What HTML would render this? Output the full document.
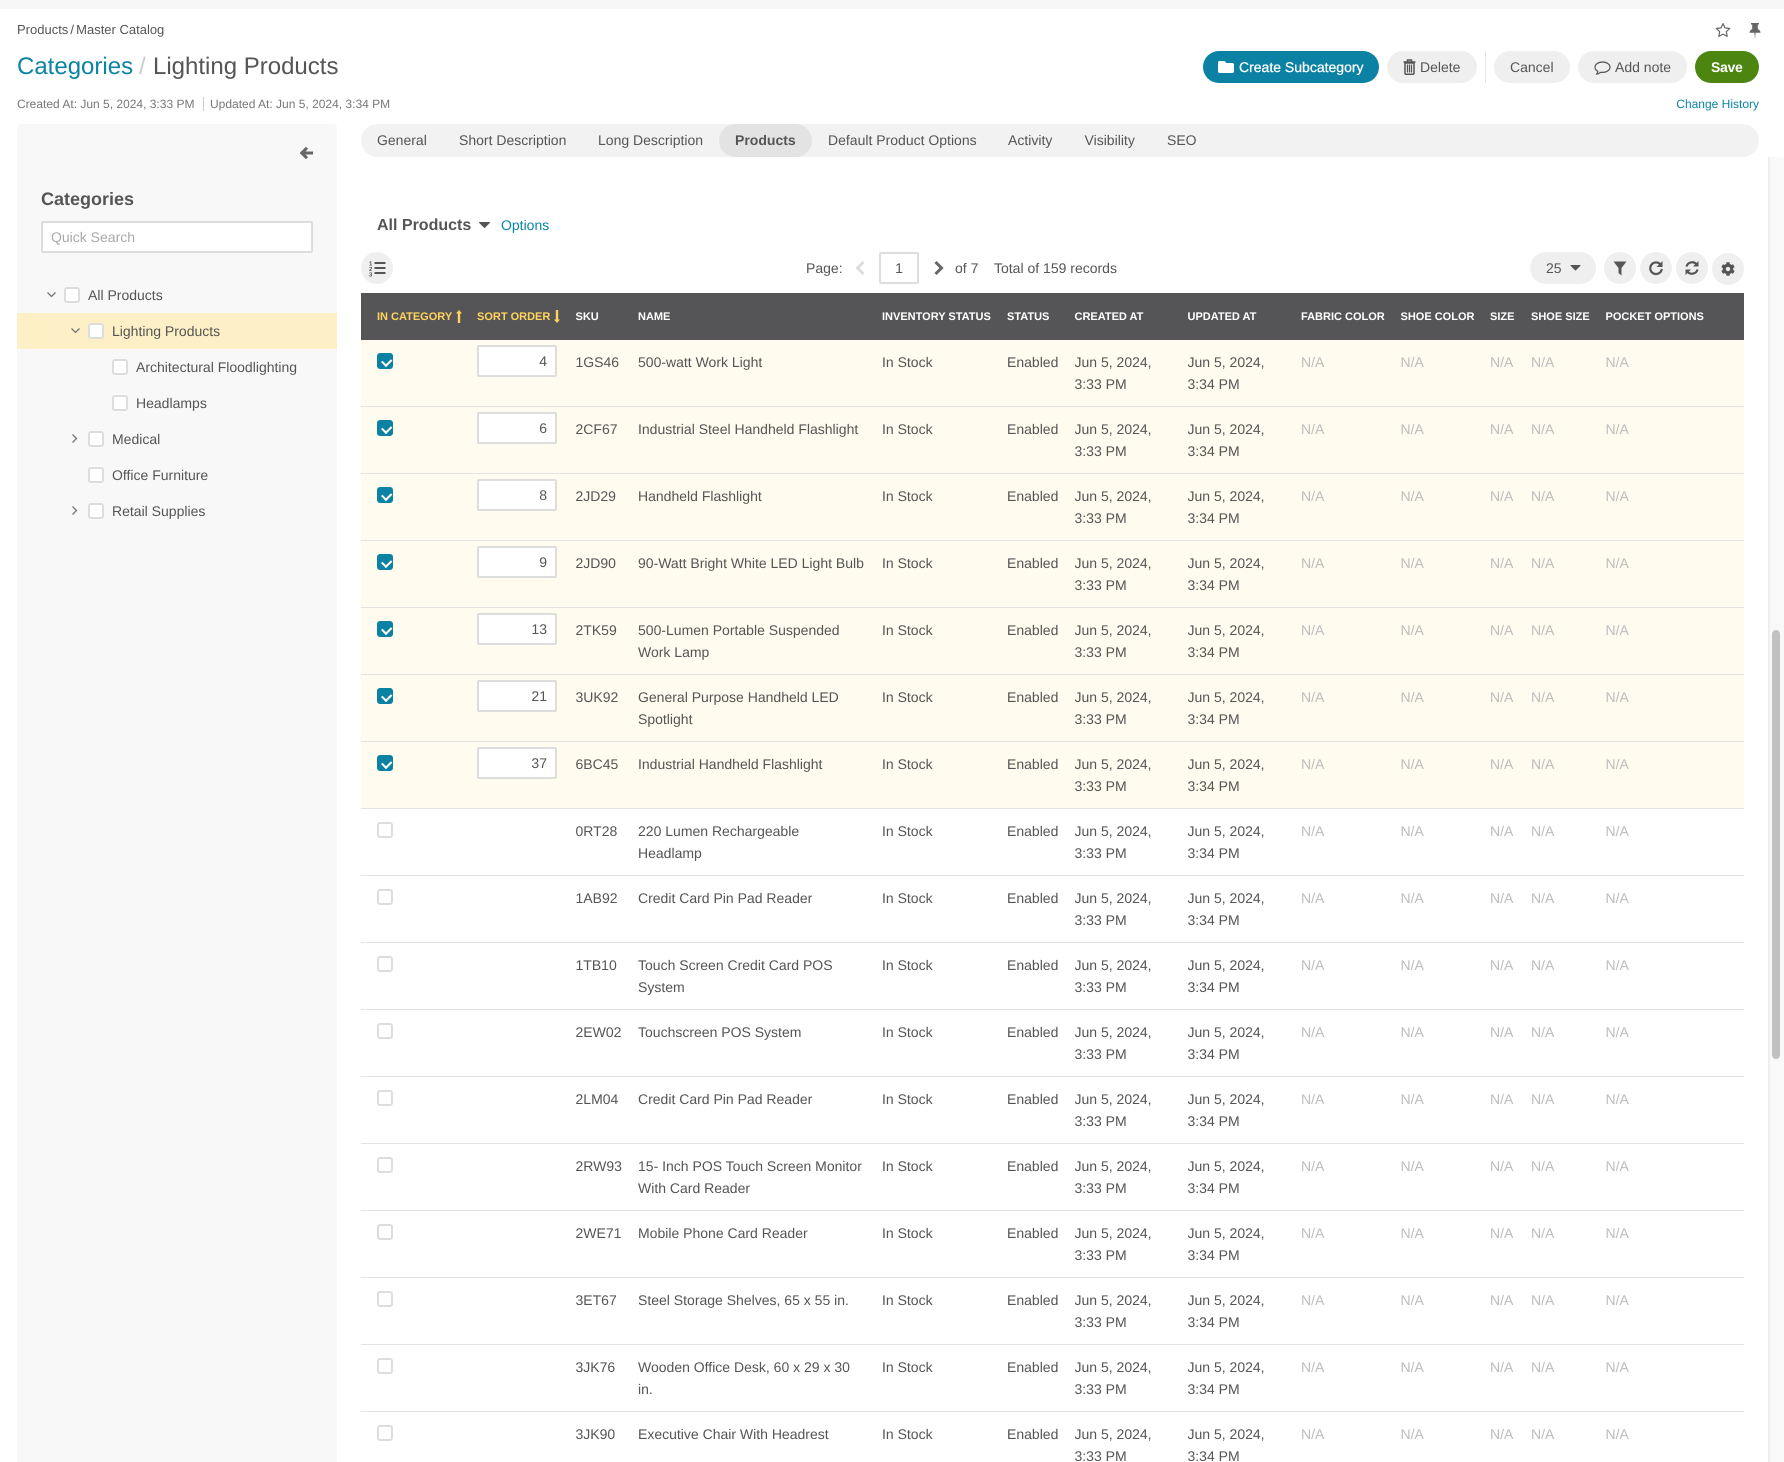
<!DOCTYPE html>
<html><head><meta charset="utf-8"><title>Lighting Products</title>
<style>
*{box-sizing:border-box}
html,body{margin:0;padding:0;background:#fff;width:1784px;height:1462px;overflow:hidden}
body{font-family:"Liberation Sans",Arial,sans-serif;font-size:14px;color:#555;text-rendering:geometricPrecision}
#w{position:relative;width:1784px;height:1462px;overflow:hidden}
.a{position:absolute;white-space:nowrap;line-height:20px}
svg{position:absolute;display:block}
a{color:#0b84a3;text-decoration:none}
.btn{position:absolute;top:51px;height:32px;border-radius:16px;background:#efefef;line-height:32px;font-size:14px;white-space:nowrap}
.btn span{position:absolute;top:0}
.rd{position:absolute;width:32px;height:32px;border-radius:50%;background:#efefef}
.t{position:absolute;line-height:33px;top:124px;white-space:nowrap}
.ck{position:absolute;width:16px;height:16px;background:#fff;border:2px solid #ddd;border-radius:3px}
.tree{position:absolute;line-height:20px;white-space:nowrap}
table{position:absolute;left:361px;top:293px;width:1383px;border-collapse:separate;border-spacing:0;table-layout:fixed}
th{height:47px;background:#555557;color:#fff;font-size:11px;font-weight:700;text-align:left;padding:0;white-space:nowrap;vertical-align:middle}
th.s{color:#ffd35c;position:relative}
td{height:67px;padding:11px 0 0;line-height:22px;vertical-align:top;border-bottom:1px solid #e3e3e3;white-space:nowrap;overflow:hidden}
td:nth-child(1),td:nth-child(2){padding:0}
tr.y td{background:#fffbef}
td.n{color:#bdbdbd}
.cb{display:block;position:relative;width:16px;height:16px;margin:13px 0 0 16px;background:#fff;border:2px solid #ddd;border-radius:3px}
.cb.on{background:#0b82a3;border-color:#0b82a3}
.cb.on:after{content:"";position:absolute;left:2.5px;top:2.5px;width:7px;height:4.5px;border-left:2.5px solid #fff;border-bottom:2.5px solid #fff;transform:rotate(-45deg)}
.so{display:block;width:80px;height:32px;margin-top:5px;border:2px solid #ddd;border-radius:2px;background:#fff;text-align:right;padding-right:8px;line-height:29px;font-weight:400}
</style></head><body><div id="w">

<div style="position:absolute;left:0;top:0;width:1784px;height:9px;background:#f7f7f7"></div>
<div class="a" style="left:17px;top:20px;font-size:13px"><span style="word-spacing:-1.5px">Products / </span>Master Catalog</div>
<div class="a" style="left:17px;top:51px;font-size:24px;line-height:32px;color:#0b84a3">Categories</div>
<div class="a" style="left:139px;top:51px;font-size:24px;line-height:32px;color:#ccc">/</div>
<div class="a" style="left:153px;top:51px;font-size:24px;line-height:32px">Lighting Products</div>
<div class="a" style="left:17px;top:94px;font-size:12px;color:#777">Created At: Jun 5, 2024, 3:33 PM</div>
<div style="position:absolute;left:203px;top:97px;width:1px;height:14px;background:#ccc"></div>
<div class="a" style="left:210px;top:94px;font-size:12px;color:#777">Updated At: Jun 5, 2024, 3:34 PM</div>

<svg style="left:1715px;top:22px" width="16" height="16" viewBox="0 0 16 16"><path d="M8 1.600l2 4.300 4.700.6-3.400 3.200.9 4.700L8 12.100l-4.200 2.300.9-4.700L1.300 6.500l4.700-.6z" fill="none" stroke="#666" stroke-width="1.200" stroke-linejoin="round"/></svg>
<svg style="left:1749px;top:23px" width="12" height="16" viewBox="0 0 12 16"><path d="M2 0h8v1.500H8.800v4.500c1.500.8 2.700 2 2.700 3.800H6.600L6 16l-.6-6.200H.5C.5 8 1.700 6.800 3.200 6V1.500H2z" fill="#666"/></svg>

<div class="btn" style="left:1203px;width:176px;background:#0b82a3;color:#fff">
<svg style="left:15px;top:9px" width="16" height="14" viewBox="0 32 512 448"><path fill="#fff" d="M464 128H272l-64-64H48C21.500 64 0 85.500 0 112v288c0 26.500 21.500 48 48 48h416c26.500 0 48-21.500 48-48V176c0-26.500-21.500-48-48-48z"/></svg>
<span style="left:36px;-webkit-text-stroke:.25px #fff">Create Subcategory</span></div>

<div class="btn" style="left:1387px;width:90px">
<svg style="left:16px;top:8px" width="13" height="16" viewBox="0 0 13 16"><path d="M4.500 2.300V1h4v1.300M.5 3h12" fill="none" stroke="#555" stroke-width="1.500"/><path d="M2 4v10.300c0 .6.400 1 1 1h7c.6 0 1-.4 1-1V4z" fill="none" stroke="#555" stroke-width="1.500"/><path d="M4.500 5.500v8M6.500 5.500v8M8.500 5.500v8" stroke="#555" stroke-width="1.200"/></svg>
<span style="left:33px">Delete</span></div>
<div style="position:absolute;left:1485px;top:51px;width:1px;height:32px;background:#e6e6e6"></div>
<div class="btn" style="left:1494px;width:76px"><span style="left:16px">Cancel</span></div>
<div class="btn" style="left:1578px;width:109px">
<svg style="left:16px;top:10px" width="17" height="15" viewBox="0 0 17 15"><path d="M8.500 1C4.400 1 1 3.300 1 6.200c0 1.700 1.100 3.200 2.900 4.100-.1 1-.6 2-1.400 2.900 1.600-.2 3.100-1 4.100-1.900.6.100 1.200.1 1.900.1 4.100 0 7.500-2.300 7.500-5.200S12.600 1 8.500 1z" fill="none" stroke="#555" stroke-width="1.200" stroke-linejoin="round"/></svg>
<span style="left:37px">Add note</span></div>
<div class="btn" style="left:1695px;width:64px;background:#4c8510;color:#fff"><span style="left:16px;font-weight:700;font-size:14px;letter-spacing:-.3px">Save</span></div>
<a class="a" style="right:25px;top:94px;font-size:12px">Change History</a>

<!-- Sidebar -->
<div style="position:absolute;left:17px;top:124px;width:320px;height:1338px;background:#f8f8f8;border-radius:4px 4px 0 0"></div>
<svg style="left:299px;top:146px" width="15" height="14" viewBox="0 0 15 14"><path d="M14 7H4M8 1.800 2.800 7 8 12.200" fill="none" stroke="#666" stroke-width="3"/></svg>
<div class="a" style="left:41px;top:188px;font-size:18px;line-height:22px;font-weight:700">Categories</div>
<div style="position:absolute;left:41px;top:221px;width:272px;height:32px;background:#fff;border:2px solid #ddd;border-radius:2px;padding-left:8px;line-height:28px;color:#aaa">Quick Search</div>

<div style="position:absolute;left:17px;top:313px;width:320px;height:36px;background:#fef0c6"></div>
<svg style="left:46px;top:291px" width="11" height="8" viewBox="0 0 11 8"><path d="M1.500 1.500l4 4 4-4" fill="none" stroke="#777" stroke-width="1.300"/></svg>
<div class="ck" style="left:64px;top:287px"></div><div class="tree" style="left:88px;top:285px">All Products</div>
<svg style="left:70px;top:327px" width="11" height="8" viewBox="0 0 11 8"><path d="M1.500 1.500l4 4 4-4" fill="none" stroke="#777" stroke-width="1.300"/></svg>
<div class="ck" style="left:88px;top:323px"></div><div class="tree" style="left:112px;top:321px">Lighting Products</div>
<div class="ck" style="left:112px;top:359px"></div><div class="tree" style="left:136px;top:357px">Architectural Floodlighting</div>
<div class="ck" style="left:112px;top:395px"></div><div class="tree" style="left:136px;top:393px">Headlamps</div>
<svg style="left:71px;top:433px" width="8" height="11" viewBox="0 0 8 11"><path d="M1.500 1.500l4 4-4 4" fill="none" stroke="#777" stroke-width="1.300"/></svg>
<div class="ck" style="left:88px;top:431px"></div><div class="tree" style="left:112px;top:429px">Medical</div>
<div class="ck" style="left:88px;top:467px"></div><div class="tree" style="left:112px;top:465px">Office Furniture</div>
<svg style="left:71px;top:505px" width="8" height="11" viewBox="0 0 8 11"><path d="M1.500 1.500l4 4-4 4" fill="none" stroke="#777" stroke-width="1.300"/></svg>
<div class="ck" style="left:88px;top:503px"></div><div class="tree" style="left:112px;top:501px">Retail Supplies</div>

<!-- Tabs -->
<div style="position:absolute;left:361px;top:124px;width:1398px;height:33px;background:#f2f2f2;border-radius:17px"></div>
<div style="position:absolute;left:719px;top:124px;width:93px;height:33px;background:#e3e3e3;border-radius:17px"></div>
<div class="t" style="left:377px">General</div>
<div class="t" style="left:459px">Short Description</div>
<div class="t" style="left:598px">Long Description</div>
<div class="t" style="left:735px;font-weight:700">Products</div>
<div class="t" style="left:828px">Default Product Options</div>
<div class="t" style="left:1008px">Activity</div>
<div class="t" style="left:1084.500px">Visibility</div>
<div class="t" style="left:1167px">SEO</div>

<!-- Scrollbar -->
<div style="position:absolute;left:1768px;top:157px;width:16px;height:1305px;background:#f9f9f9;border-left:2px solid #eee"></div>
<div style="position:absolute;left:1772px;top:630px;width:8px;height:429px;background:#c1c1c1;border-radius:4px"></div>

<!-- Toolbar -->
<div class="a" style="left:377px;top:215.500px;font-size:16px;font-weight:700">All Products</div>
<svg style="left:479px;top:222px" width="11" height="6" viewBox="0 0 11 6"><path d="M.5.500h10L5.500 5.500z" fill="#555" stroke="#555" stroke-linejoin="round"/></svg>
<a class="a" style="left:501px;top:215px">Options</a>

<div class="rd" style="left:361px;top:252px">
<svg style="left:8px;top:8px" width="17" height="17" viewBox="0 0 17 17"><path d="M5.500 3h11M5.500 8h11M5.500 13h11" stroke="#555" stroke-width="2"/><text x="0" y="5.500" font-size="6" font-weight="700" fill="#555" font-family="Liberation Sans">1</text><text x="0" y="11" font-size="6" font-weight="700" fill="#555" font-family="Liberation Sans">2</text><text x="0" y="16.500" font-size="6" font-weight="700" fill="#555" font-family="Liberation Sans">3</text></svg></div>

<div class="a" style="left:806px;top:258px">Page:</div>
<svg style="left:854px;top:260px" width="12" height="16" viewBox="0 0 12 16"><path d="M9.500 2L3.500 8l6 6" fill="none" stroke="#ddd" stroke-width="3"/></svg>
<div style="position:absolute;left:879px;top:252px;width:40px;height:32px;border:2px solid #ddd;border-radius:2px;text-align:center;line-height:28px">1</div>
<svg style="left:933px;top:260px" width="12" height="16" viewBox="0 0 12 16"><path d="M2.500 2l6 6-6 6" fill="none" stroke="#666" stroke-width="3"/></svg>
<div class="a" style="left:955px;top:258px">of 7</div>
<div class="a" style="left:994px;top:258px">Total of 159 records</div>

<div style="position:absolute;left:1530px;top:252px;width:66px;height:32px;border-radius:16px;background:#efefef"></div>
<div class="a" style="left:1546px;top:258px">25</div>
<svg style="left:1570px;top:265px" width="11" height="6" viewBox="0 0 11 6"><path d="M1 .5h9L5.500 5z" fill="#555" stroke="#555" stroke-linejoin="round"/></svg>

<div class="rd" style="left:1604px;top:252px"><svg style="left:9px;top:9px" width="14" height="15" viewBox="0 0 14 15"><path d="M.5.500h13L8.500 7v7.500L5.500 12V7z" fill="#555"/></svg></div>
<div class="rd" style="left:1640px;top:252px"><svg style="left:8px;top:8px" width="16" height="16" viewBox="0 0 16 16"><path d="M12.300 4.300A5.800 5.800 0 1 0 13.800 9" fill="none" stroke="#555" stroke-width="2.200"/><path d="M14.500 1v6h-6z" fill="#555"/></svg></div>
<div class="rd" style="left:1676px;top:252px"><svg style="left:8px;top:8px" width="16" height="16" viewBox="0 0 16 16"><path d="M2.500 6.500A5.800 5.800 0 0 1 12.500 4.300" fill="none" stroke="#555" stroke-width="2.200"/><path d="M13.500 9.500A5.800 5.800 0 0 1 3.500 11.700" fill="none" stroke="#555" stroke-width="2.200"/><path d="M14.500 1v5.500H9zM1.500 15V9.500H7z" fill="#555"/></svg></div>
<div class="rd" style="left:1712px;top:253px"><svg style="left:9px;top:9px" width="14" height="14" viewBox="0 0 512 512"><path fill="#555" d="M487.400 315.700l-42.600-24.600c4.300-23.200 4.300-47 0-70.200l42.600-24.600c4.900-2.800 7.100-8.600 5.500-14-11.100-35.600-30-67.800-54.700-94.600-3.800-4.100-10-5.100-14.800-2.300L380.800 110c-17.900-15.400-38.500-27.300-60.800-35.100V25.800c0-5.600-3.900-10.500-9.400-11.700-36.700-8.200-74.300-7.800-109.200 0-5.500 1.200-9.400 6.100-9.400 11.700V75c-22.200 7.900-42.800 19.800-60.800 35.100L88.700 85.500c-4.900-2.800-11-1.900-14.800 2.300-24.700 26.700-43.600 58.900-54.700 94.600-1.700 5.400.6 11.200 5.500 14L67.300 221c-4.300 23.200-4.300 47 0 70.200l-42.600 24.600c-4.900 2.800-7.100 8.600-5.500 14 11.100 35.600 30 67.800 54.700 94.600 3.800 4.100 10 5.100 14.800 2.300l42.600-24.600c17.900 15.400 38.500 27.300 60.800 35.100v49.200c0 5.600 3.900 10.500 9.400 11.700 36.700 8.200 74.300 7.800 109.200 0 5.500-1.200 9.400-6.100 9.400-11.700v-49.200c22.200-7.900 42.800-19.800 60.800-35.100l42.600 24.600c4.900 2.800 11 1.900 14.800-2.300 24.700-26.700 43.600-58.900 54.700-94.600 1.500-5.500-.7-11.300-5.600-14.100zM256 336c-44.100 0-80-35.900-80-80s35.900-80 80-80 80 35.900 80 80-35.900 80-80 80z"/></svg></div>

<!-- Table -->
<table>
<colgroup><col style="width:116px"><col style="width:98.500px"><col style="width:62.500px"><col style="width:244px"><col style="width:125px"><col style="width:67.500px"><col style="width:113px"><col style="width:113.500px"><col style="width:99.500px"><col style="width:89.500px"><col style="width:41px"><col style="width:74.500px"><col style="width:138.500px"></colgroup>
<thead><tr>
<th class="s" style="padding-left:16px">IN CATEGORY<svg style="left:95px;top:17px" width="6" height="13" viewBox="0 0 6 13"><path d="M3 0l3 3.500H4.200V13H1.800V3.500H0z" fill="#ffd35c"/></svg></th>
<th class="s">SORT ORDER<svg style="left:77px;top:17px" width="6" height="13" viewBox="0 0 6 13"><path d="M3 13l3-3.500H4.200V0H1.800v9.500H0z" fill="#ffd35c"/></svg></th>
<th>SKU</th><th>NAME</th><th>INVENTORY STATUS</th><th>STATUS</th><th>CREATED AT</th><th>UPDATED AT</th><th>FABRIC COLOR</th><th>SHOE COLOR</th><th>SIZE</th><th>SHOE SIZE</th><th>POCKET OPTIONS</th>
</tr></thead>
<tbody>
<tr class="y"><td><i class="cb on"></i></td><td><b class="so">4</b></td><td>1GS46</td><td>500-watt Work Light</td><td>In Stock</td><td>Enabled</td><td>Jun 5, 2024,<br>3:33 PM</td><td>Jun 5, 2024,<br>3:34 PM</td><td class="n">N/A</td><td class="n">N/A</td><td class="n">N/A</td><td class="n">N/A</td><td class="n">N/A</td></tr>
<tr class="y"><td><i class="cb on"></i></td><td><b class="so">6</b></td><td>2CF67</td><td>Industrial Steel Handheld Flashlight</td><td>In Stock</td><td>Enabled</td><td>Jun 5, 2024,<br>3:33 PM</td><td>Jun 5, 2024,<br>3:34 PM</td><td class="n">N/A</td><td class="n">N/A</td><td class="n">N/A</td><td class="n">N/A</td><td class="n">N/A</td></tr>
<tr class="y"><td><i class="cb on"></i></td><td><b class="so">8</b></td><td>2JD29</td><td>Handheld Flashlight</td><td>In Stock</td><td>Enabled</td><td>Jun 5, 2024,<br>3:33 PM</td><td>Jun 5, 2024,<br>3:34 PM</td><td class="n">N/A</td><td class="n">N/A</td><td class="n">N/A</td><td class="n">N/A</td><td class="n">N/A</td></tr>
<tr class="y"><td><i class="cb on"></i></td><td><b class="so">9</b></td><td>2JD90</td><td>90-Watt Bright White LED Light Bulb</td><td>In Stock</td><td>Enabled</td><td>Jun 5, 2024,<br>3:33 PM</td><td>Jun 5, 2024,<br>3:34 PM</td><td class="n">N/A</td><td class="n">N/A</td><td class="n">N/A</td><td class="n">N/A</td><td class="n">N/A</td></tr>
<tr class="y"><td><i class="cb on"></i></td><td><b class="so">13</b></td><td>2TK59</td><td>500-Lumen Portable Suspended<br>Work Lamp</td><td>In Stock</td><td>Enabled</td><td>Jun 5, 2024,<br>3:33 PM</td><td>Jun 5, 2024,<br>3:34 PM</td><td class="n">N/A</td><td class="n">N/A</td><td class="n">N/A</td><td class="n">N/A</td><td class="n">N/A</td></tr>
<tr class="y"><td><i class="cb on"></i></td><td><b class="so">21</b></td><td>3UK92</td><td>General Purpose Handheld LED<br>Spotlight</td><td>In Stock</td><td>Enabled</td><td>Jun 5, 2024,<br>3:33 PM</td><td>Jun 5, 2024,<br>3:34 PM</td><td class="n">N/A</td><td class="n">N/A</td><td class="n">N/A</td><td class="n">N/A</td><td class="n">N/A</td></tr>
<tr class="y"><td><i class="cb on"></i></td><td><b class="so">37</b></td><td>6BC45</td><td>Industrial Handheld Flashlight</td><td>In Stock</td><td>Enabled</td><td>Jun 5, 2024,<br>3:33 PM</td><td>Jun 5, 2024,<br>3:34 PM</td><td class="n">N/A</td><td class="n">N/A</td><td class="n">N/A</td><td class="n">N/A</td><td class="n">N/A</td></tr>
<tr><td><i class="cb"></i></td><td></td><td>0RT28</td><td>220 Lumen Rechargeable<br>Headlamp</td><td>In Stock</td><td>Enabled</td><td>Jun 5, 2024,<br>3:33 PM</td><td>Jun 5, 2024,<br>3:34 PM</td><td class="n">N/A</td><td class="n">N/A</td><td class="n">N/A</td><td class="n">N/A</td><td class="n">N/A</td></tr>
<tr><td><i class="cb"></i></td><td></td><td>1AB92</td><td>Credit Card Pin Pad Reader</td><td>In Stock</td><td>Enabled</td><td>Jun 5, 2024,<br>3:33 PM</td><td>Jun 5, 2024,<br>3:34 PM</td><td class="n">N/A</td><td class="n">N/A</td><td class="n">N/A</td><td class="n">N/A</td><td class="n">N/A</td></tr>
<tr><td><i class="cb"></i></td><td></td><td>1TB10</td><td>Touch Screen Credit Card POS<br>System</td><td>In Stock</td><td>Enabled</td><td>Jun 5, 2024,<br>3:33 PM</td><td>Jun 5, 2024,<br>3:34 PM</td><td class="n">N/A</td><td class="n">N/A</td><td class="n">N/A</td><td class="n">N/A</td><td class="n">N/A</td></tr>
<tr><td><i class="cb"></i></td><td></td><td>2EW02</td><td>Touchscreen POS System</td><td>In Stock</td><td>Enabled</td><td>Jun 5, 2024,<br>3:33 PM</td><td>Jun 5, 2024,<br>3:34 PM</td><td class="n">N/A</td><td class="n">N/A</td><td class="n">N/A</td><td class="n">N/A</td><td class="n">N/A</td></tr>
<tr><td><i class="cb"></i></td><td></td><td>2LM04</td><td>Credit Card Pin Pad Reader</td><td>In Stock</td><td>Enabled</td><td>Jun 5, 2024,<br>3:33 PM</td><td>Jun 5, 2024,<br>3:34 PM</td><td class="n">N/A</td><td class="n">N/A</td><td class="n">N/A</td><td class="n">N/A</td><td class="n">N/A</td></tr>
<tr><td><i class="cb"></i></td><td></td><td>2RW93</td><td>15- Inch POS Touch Screen Monitor<br>With Card Reader</td><td>In Stock</td><td>Enabled</td><td>Jun 5, 2024,<br>3:33 PM</td><td>Jun 5, 2024,<br>3:34 PM</td><td class="n">N/A</td><td class="n">N/A</td><td class="n">N/A</td><td class="n">N/A</td><td class="n">N/A</td></tr>
<tr><td><i class="cb"></i></td><td></td><td>2WE71</td><td>Mobile Phone Card Reader</td><td>In Stock</td><td>Enabled</td><td>Jun 5, 2024,<br>3:33 PM</td><td>Jun 5, 2024,<br>3:34 PM</td><td class="n">N/A</td><td class="n">N/A</td><td class="n">N/A</td><td class="n">N/A</td><td class="n">N/A</td></tr>
<tr><td><i class="cb"></i></td><td></td><td>3ET67</td><td>Steel Storage Shelves, 65 x 55 in.</td><td>In Stock</td><td>Enabled</td><td>Jun 5, 2024,<br>3:33 PM</td><td>Jun 5, 2024,<br>3:34 PM</td><td class="n">N/A</td><td class="n">N/A</td><td class="n">N/A</td><td class="n">N/A</td><td class="n">N/A</td></tr>
<tr><td><i class="cb"></i></td><td></td><td>3JK76</td><td>Wooden Office Desk, 60 x 29 x 30<br>in.</td><td>In Stock</td><td>Enabled</td><td>Jun 5, 2024,<br>3:33 PM</td><td>Jun 5, 2024,<br>3:34 PM</td><td class="n">N/A</td><td class="n">N/A</td><td class="n">N/A</td><td class="n">N/A</td><td class="n">N/A</td></tr>
<tr><td><i class="cb"></i></td><td></td><td>3JK90</td><td>Executive Chair With Headrest</td><td>In Stock</td><td>Enabled</td><td>Jun 5, 2024,<br>3:33 PM</td><td>Jun 5, 2024,<br>3:34 PM</td><td class="n">N/A</td><td class="n">N/A</td><td class="n">N/A</td><td class="n">N/A</td><td class="n">N/A</td></tr>
</tbody></table>
</div></body></html>
